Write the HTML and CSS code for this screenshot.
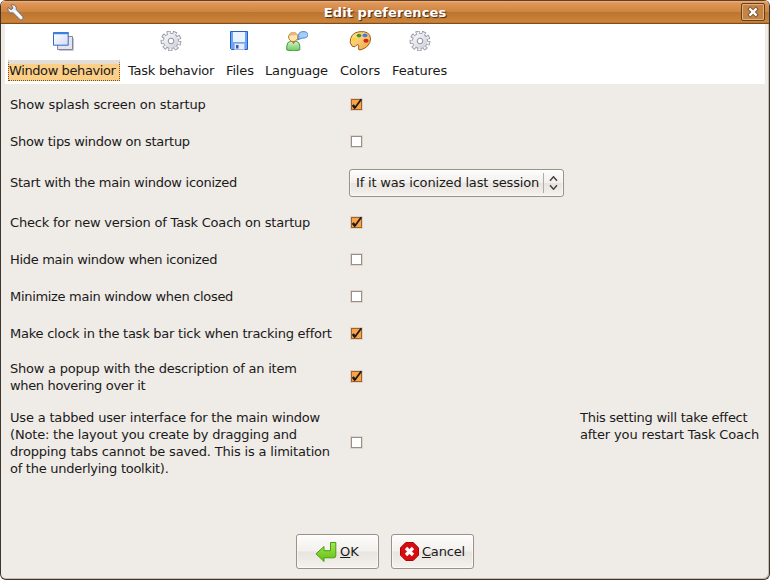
FILE: index.html
```html
<!DOCTYPE html>
<html lang="en">
<head>
<meta charset="utf-8">
<title>Edit preferences</title>
<link rel="stylesheet" href="styles.css">
</head>
<body>
<svg width="0" height="0" class="defs" aria-hidden="true">
  <defs>
    <linearGradient id="blue" x1="0" y1="0" x2="1" y2="1"><stop offset="0" stop-color="#fff"/><stop offset="1" stop-color="#d3dcf4"/></linearGradient>
    <linearGradient id="grey" x1="0" y1="0" x2="1" y2="1"><stop offset="0" stop-color="#fafafc"/><stop offset="1" stop-color="#ceced9"/></linearGradient>
    <linearGradient id="green" x1="0" y1="0" x2="0" y2="1"><stop offset="0" stop-color="#a5e55a"/><stop offset="1" stop-color="#63bf10"/></linearGradient>
    <linearGradient id="body" x1="0" y1="0" x2="0" y2="1"><stop offset="0" stop-color="#d4f5cc"/><stop offset="1" stop-color="#6cc95f"/></linearGradient>
    <linearGradient id="wood" x1="0" y1="0" x2="1" y2="1"><stop offset="0" stop-color="#ffe7a0"/><stop offset="1" stop-color="#f0a540"/></linearGradient>
    <symbol id="gear" viewBox="0 0 22 20">
      <circle cx="11" cy="10" r="8" fill="#9696a4"/>
      <circle cx="11" cy="10" r="8.4" fill="none" stroke="#9696a4" stroke-width="4" stroke-dasharray="3.9 1.964"/>
      <circle cx="11" cy="10" r="8.2" fill="none" stroke="#ececf2" stroke-width="2.6" stroke-dasharray="2.5 3.225" stroke-dashoffset="-.7"/>
      <circle cx="11" cy="10" r="7.2" fill="url(#grey)"/>
      <circle cx="11" cy="10" r="2.8" fill="#fff" stroke="#8f8f9d"/>
    </symbol>
    <symbol id="tick" viewBox="0 0 13 13">
      <path d="M5 9.8 11.3 1.2" fill="none" stroke="#1c1a18" stroke-width="1.8"/><path d="M2.8 7 5.4 10.6" stroke="#1c1a18" stroke-width="2.5"/>
    </symbol>
  </defs>
</svg>
<div class="window">
  <header class="titlebar">
    <svg class="wrench" viewBox="0 0 17 17"><path d="M1.2 3.4 4 5.7 6 4.1 4.1 1Q8-.1 9.3 3.6L9.2 5.6l6.6 6.9q1 2.4-.8 3.4-1.4.4-2.4-.7L6.2 8.9Q3.2 9.7 1.3 7 .4 5 1.2 3.4Z" fill="#eceef4" stroke="#6d6874"/><path d="m7.5 6.8 6.5 6.8" stroke="#fff" stroke-width="1.8"/></svg>
    <h1>Edit preferences</h1>
    <button class="close" aria-label="Close"><svg viewBox="0 0 12 12"><path d="m3.3 3.3 5.4 5.4m0-5.4-5.4 5.4" stroke="#6b4423" stroke-width="4" stroke-linecap="square"/><path d="m3.3 3.3 5.4 5.4m0-5.4-5.4 5.4" stroke="#fff" stroke-width="2.4" stroke-linecap="square"/></svg></button>
  </header>
  <nav class="tabs">
    <div class="tab active"><svg viewBox="0 0 22 20"><path d="M5.5 5.5h15v13h-15z" fill="#e4e4ec" stroke="#85859a"/><path d="M7 19.5h14.5V7" fill="none" stroke="#c8c8d2"/><path d="M1.5 1.5h14.7v12.7H1.5z" fill="url(#blue)" stroke="#3469c9"/><path d="M1 2.3h15.7" stroke="#3c82e4" stroke-width="2"/></svg><span>Window behavior</span></div>
    <div class="tab task"><svg viewBox="0 0 22 20"><use href="#gear"/></svg><span>Task behavior</span></div>
    <div class="tab files"><svg viewBox="0 0 22 20"><path d="M1.5.5h17v18h-16l-1-1z" fill="#6aa5f8" stroke="#2460c4"/><path d="M4 1h12v10H4z" fill="#eaf4ff"/><path d="M5.5 12.5h10v6h-10z" fill="#e7ebfa" stroke="#a3b8e4"/><path d="M7 14h2.5v3.5H7z" fill="#3c54b8"/></svg><span>Files</span></div>
    <div class="tab lang"><svg viewBox="0 0 22 20"><path d="M.8 19v-4q0-4 4-5h5q4 1 4 5v4q-6 2-13 0Z" fill="url(#body)" stroke="#489d40"/><path d="m5 10 2.5 3 2.5-3" fill="#e55722"/><circle cx="7.2" cy="6" r="4.6" fill="#ffe5b0" stroke="#b87a34"/><path d="M3 5q1-4 4.5-4 3 0 4 3-4 .2-8.5 1Z" fill="#e6b978"/><path d="M13 6.8q-2-5.8 4-6.2 5-.1 5 3.5-.5 3.3-6 3L11.5 9Z" fill="#a5cdf9" stroke="#4787d2"/></svg><span>Language</span></div>
    <div class="tab colors"><svg viewBox="0 0 22 20"><path d="M10 .8q11-1.5 11.6 7-.5 8-9.6 11-3 1-2.5-2 .8-4-1.5-3-1 .5-2 2-3 1-4.8-4Q1 2 10 .8Z" fill="url(#wood)" stroke="#a15a16"/><ellipse cx="5.2" cy="8.5" rx="2.3" ry="2" fill="#ffd332"/><ellipse cx="10" cy="4.6" rx="2.4" ry="1.8" fill="#3f9c21"/><ellipse cx="16" cy="4.3" rx="2.5" ry="1.9" fill="#3d80df"/><ellipse cx="17" cy="9.7" rx="2.6" ry="2" fill="#d82416"/></svg><span>Colors</span></div>
    <div class="tab features"><svg viewBox="0 0 22 20"><use href="#gear"/></svg><span>Features</span></div>
  </nav>
  <main class="settings">
    <div class="row r1"><label>Show splash screen on startup</label><i class="check on"><svg><use href="#tick"/></svg></i></div>
    <div class="row r2"><label>Show tips window on startup</label><i class="check"></i></div>
    <div class="row r3"><label>Start with the main window iconized</label><div class="select"><span>If it was iconized last session</span><svg viewBox="0 0 8 14"><path d="m.5 4.8 3.5-4 3.5 4M.5 9.2l3.5 4 3.5-4" fill="none" stroke="#444" stroke-width="1.5"/></svg></div></div>
    <div class="row r4"><label>Check for new version of Task Coach on startup</label><i class="check on"><svg><use href="#tick"/></svg></i></div>
    <div class="row r5"><label>Hide main window when iconized</label><i class="check"></i></div>
    <div class="row r6"><label>Minimize main window when closed</label><i class="check"></i></div>
    <div class="row r7"><label>Make clock in the task bar tick when tracking effort</label><i class="check on"><svg><use href="#tick"/></svg></i></div>
    <div class="row r8"><label>Show a popup with the description of an item<br><span class="tighter">when hovering over it</span></label><i class="check on"><svg><use href="#tick"/></svg></i></div>
    <div class="row r9"><label>Use a tabbed user interface for the main window<br>(Note: the layout you create by dragging and<br>dropping tabs cannot be saved. This is a limitation<br><span class="tight">of the underlying toolkit).</span></label><i class="check"></i><p><span class="tight">This setting will take effect</span><br>after you restart Task Coach</p></div>
  </main>
  <footer class="actions">
    <button class="ok"><svg viewBox="0 0 22 22"><path d="M15.5 1.5h5.3v13.3q0 2-2 2H9v3.7L1 12.8l8-7.3v4.2h6.5Z" fill="url(#green)" stroke="#489f08"/></svg><span><u>O</u>K</span></button>
    <button class="cancel"><svg viewBox="0 0 22 22"><path d="M6.8 1.5h7.4l5.3 5.3v7.4l-5.3 5.3H6.8l-5.3-5.3V6.8Z" fill="#d50d12" stroke="#b30000"/><path d="m7 7 7 7m0-7-7 7" stroke="#fff" stroke-width="3.3"/></svg><span><u>C</u>ancel</span></button>
  </footer>
</div>
</body>
</html>
```

FILE: styles.css
```css
* { box-sizing: border-box; }
body { margin: 0; background: #fff; font: 13px/17px "DejaVu Sans", sans-serif; color: #1a1a1a; }
.defs { display: block; height: 0; }
.window { width: 770px; height: 580px; border: 1px solid #3d3430; border-top: 0; border-radius: 6px; background: #efebe7; overflow: hidden; display: flex; flex-direction: column; box-shadow: inset -1px -1px #c9bcae; }
.titlebar { height: 24px; flex: none; display: grid; grid-template-columns: 30px 1fr 30px; align-items: center; border-top: 1px solid #5e4128; border-bottom: 1px solid #7b4d22; background: linear-gradient(#efb27b 0, #df965a 2px, #cf863f 48%, #bc7531 52%, #cc8439 95%, #b66d28); }
.wrench { width: 17px; height: 17px; margin-left: 6px; }
h1 { margin: 0; font-size: 13px; line-height: 17px; letter-spacing: .08px; text-align: center; color: #fff; text-shadow: 1px 1px 1px #3d2918; }
.close { width: 24px; height: 18px; padding: 0; border: 1px solid #62401f; border-radius: 2px; background: #c58344; box-shadow: inset 0 0 0 1px #ddb184; display: grid; place-items: center; margin-left: 2px; }
.close svg { width: 12px; height: 12px; }
.tabs { height: 60px; flex: none; background: #fff; margin: 0 4px; padding-left: 3px; display: flex; gap: 12px; }
.tab { display: flex; flex-direction: column; align-items: center; padding-top: 7px; white-space: nowrap; }
.tab svg { width: 22px; height: 20px; flex: none; }
.tab span { margin-top: 11px; width: 100%; }
.tab.active { width: 112px; margin-right: -4px; }
.tab.active svg { margin-left: -2px; }
.tab.active span { margin-top: 9px; height: 21px; line-height: 13px; background: #fccf87; border: 1px dotted #765124; border-top: 4px solid #e3ddd7; letter-spacing: -.4px; }
.task { width: 86px; letter-spacing: -.24px; }
.files { width: 27px; letter-spacing: -.15px; }
.lang { width: 63px; letter-spacing: -.15px; }
.colors { width: 40px; letter-spacing: -.1px; }
.features { width: 55px; letter-spacing: -.1px; }
.settings { height: 439px; flex: none; padding-left: 9px; }
.row { display: grid; grid-template-columns: 339px 231px 1fr; align-items: center; height: 37px; white-space: nowrap; }
.r1 { margin-top: 2px; letter-spacing: -.13px; }
.r2 { letter-spacing: -.29px; }
.r3 { height: 45px; letter-spacing: -.28px; }
.r4 { height: 36px; padding-bottom: 2px; letter-spacing: -.2px; }
.r5 { letter-spacing: -.32px; }
.r6 { letter-spacing: -.31px; }
.r7 { letter-spacing: -.24px; }
.r8 { height: 49px; letter-spacing: -.22px; }
.r9 { height: 83px; letter-spacing: -.18px; }
.tight { letter-spacing: -.27px; }
.tighter { letter-spacing: -.35px; }
.row p { margin: 0; align-self: start; padding-top: 8px; letter-spacing: -.14px; }
.check { width: 13px; height: 13px; margin-left: 1px; border: 1px solid #dcd5ce; box-shadow: inset 0 0 0 1px #9d8d83; background: #fff; }
.check.on { background: #fba447; box-shadow: inset 0 0 0 1px #9d6227; }
.check svg { display: block; width: 13px; height: 13px; margin: -1px; }
.select, .actions button { border: 1px solid #9a9188; border-radius: 3px; background: linear-gradient(#fdfdfc, #f3f0ed 48%, #e8e4df 52%, #f4f2ef); box-shadow: inset 0 0 0 1px #fff8; }
.select { width: 215px; height: 28px; display: flex; align-items: center; padding-left: 6px; letter-spacing: -.17px; }
.select span { width: 187px; }
.select svg { width: 20px; height: 20px; padding: 3px 0; border-left: 1px solid #b3aba3; }
.actions { display: flex; gap: 12px; padding-left: 295px; margin-top: 11px; }
.actions button { height: 35px; width: 83px; padding: 0; font: inherit; color: inherit; display: flex; justify-content: center; align-items: center; gap: 3px; }
.actions .ok { padding-right: 1px; }
.actions .cancel { gap: 1px; padding-right: 1px; letter-spacing: -.15px; }
.actions svg { width: 22px; height: 22px; flex: none; }
```
